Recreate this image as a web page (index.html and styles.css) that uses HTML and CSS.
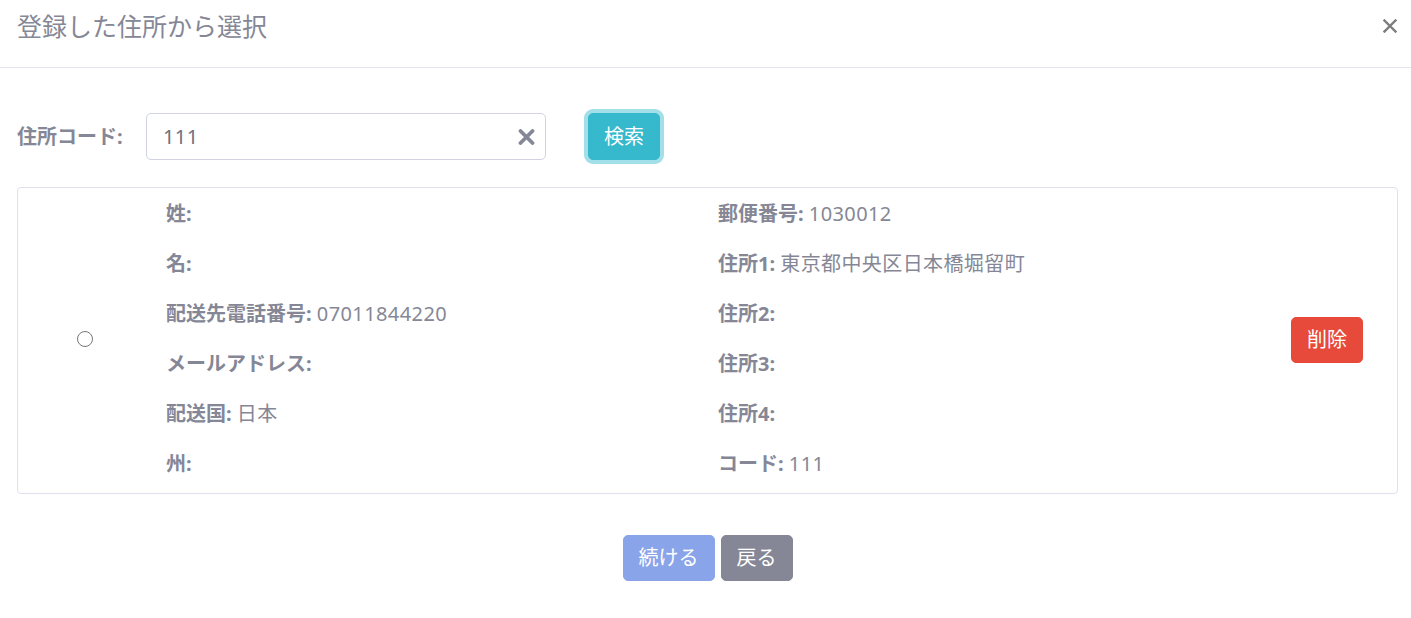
FILE: index.html
```html
<!DOCTYPE html>
<html lang="ja">
<head>
<meta charset="utf-8">
<title>登録した住所から選択</title>
<link rel="stylesheet" href="styles.css">
</head>
<body>
<div class="modal">
  <div class="modal-header">
    <h5 class="modal-title">登録した住所から選択</h5>
    <button class="close" type="button" aria-label="Close">
      <svg width="14" height="14" viewBox="0 0 14 14"><path d="M1.5 1.5L12.5 12.5M12.5 1.5L1.5 12.5" stroke="#7d7d7d" stroke-width="2.4" stroke-linecap="square"/></svg>
    </button>
  </div>
  <div class="modal-body">
    <div class="search-row">
      <label class="search-label">住所コード:</label>
      <div class="input-box">
        <span class="input-value">111</span>
        <svg class="clear-icon" width="17" height="16" viewBox="0 0 17 16"><path d="M2.5 2L14.5 14M14.5 2L2.5 14" stroke="#858796" stroke-width="3.8" stroke-linecap="round"/></svg>
      </div>
      <button class="btn btn-info" type="button">検索</button>
    </div>

    <div class="card">
      <div class="radio-col"><input type="radio" name="addr" class="radio"></div>
      <div class="info-col">
        <p class="row"><b>姓:</b></p>
        <p class="row"><b>名:</b></p>
        <p class="row"><b>配送先電話番号:</b> <span class="val">07011844220</span></p>
        <p class="row"><b>メールアドレス:</b></p>
        <p class="row"><b>配送国:</b> <span class="val">日本</span></p>
        <p class="row"><b>州:</b></p>
      </div>
      <div class="info-col info-right">
        <p class="row"><b>郵便番号:</b> <span class="val">1030012</span></p>
        <p class="row"><b>住所1:</b> <span class="val">東京都中央区日本橋堀留町</span></p>
        <p class="row"><b>住所2:</b></p>
        <p class="row"><b>住所3:</b></p>
        <p class="row"><b>住所4:</b></p>
        <p class="row"><b>コード:</b> <span class="val">111</span></p>
      </div>
      <div class="del-col"><button class="btn btn-danger" type="button">削除</button></div>
    </div>

    <div class="footer">
      <button class="btn btn-primary-disabled" type="button">続ける</button>
      <button class="btn btn-secondary" type="button">戻る</button>
    </div>
  </div>
</div>
</body>
</html>
```

FILE: styles.css
```css
* { box-sizing: border-box; }

html, body {
  margin: 0;
  padding: 0;
  background: #ffffff;
}

body {
  font-family: "Noto Sans", "Noto Sans CJK JP", sans-serif;
  color: #858796;
  font-size: 20px;
}

.modal-header {
  height: 68px;
  display: flex;
  justify-content: space-between;
  align-items: flex-start;
  padding: 0 14px 0 17px;
  border-bottom: 1px solid #e3e6f0;
}

.modal-title {
  margin: 8px 0 0 0;
  font-size: 25px;
  line-height: 37px;
  font-weight: 400;
  color: #858796;
}

.close {
  margin-top: 19px;
  padding: 0;
  border: 0;
  background: none;
  width: 14px;
  height: 14px;
  display: flex;
}

.modal-body {
  padding: 0 13px 0 17px;
}

.search-row {
  display: flex;
  align-items: center;
  margin-top: 45px;
  height: 47px;
}

.search-label {
  width: 129px;
  font-weight: 700;
  font-size: 20px;
  line-height: 30px;
  color: #858796;
}

.input-box {
  width: 400px;
  height: 47px;
  border: 1px solid #d1d3e2;
  border-radius: 5px;
  display: flex;
  align-items: center;
  justify-content: space-between;
  padding: 0 10px 0 16px;
}

.input-value {
  color: #6e707e;
  font-size: 20px;
  line-height: 30px;
  letter-spacing: 0.4px;
}

.clear-icon { display: block; }

.btn {
  font-family: "Noto Sans", "Noto Sans CJK JP", sans-serif;
  font-size: 20px;
  line-height: 30px;
  padding: 7px 15px;
  border: 1px solid transparent;
  border-radius: 5px;
  color: #ffffff;
  cursor: pointer;
}

.btn-info {
  margin-left: 42px;
  height: 47px;
  background: #36b9cc;
  border-color: #36b9cc;
  box-shadow: 0 0 0 4px #a3dfe8;
}

.card {
  margin-top: 27px;
  height: 307px;
  border: 1px solid #dfe1ec;
  border-radius: 4px;
  display: flex;
  align-items: stretch;
  padding: 11px 34px 14px 0;
}

.radio-col {
  width: 134px;
  display: flex;
  align-items: center;
  justify-content: center;
  margin-right: 14px;
}

.radio {
  width: 16px;
  height: 16px;
  margin: 0;
  accent-color: #555;
}

.info-col {
  width: 552px;
  display: flex;
  flex-direction: column;
  gap: 20px;
}

.info-right {
  flex: 1;
}

.row {
  margin: 0;
  font-size: 20px;
  line-height: 30px;
  color: #858796;
  white-space: nowrap;
}

.row b {
  font-weight: 700;
}

.val {
  letter-spacing: 0.4px;
}

.del-col {
  display: flex;
  align-items: center;
}

.btn-danger {
  background: #e74a3b;
  border-color: #e74a3b;
  padding: 7px 15px;
  margin-top: 1px;
}

.footer {
  display: flex;
  justify-content: center;
  gap: 6px;
  margin-top: 41px;
}

.btn-primary-disabled {
  background: #8aa4e9;
  border-color: #8aa4e9;
}

.btn-secondary {
  background: #858796;
  border-color: #858796;
}
```
